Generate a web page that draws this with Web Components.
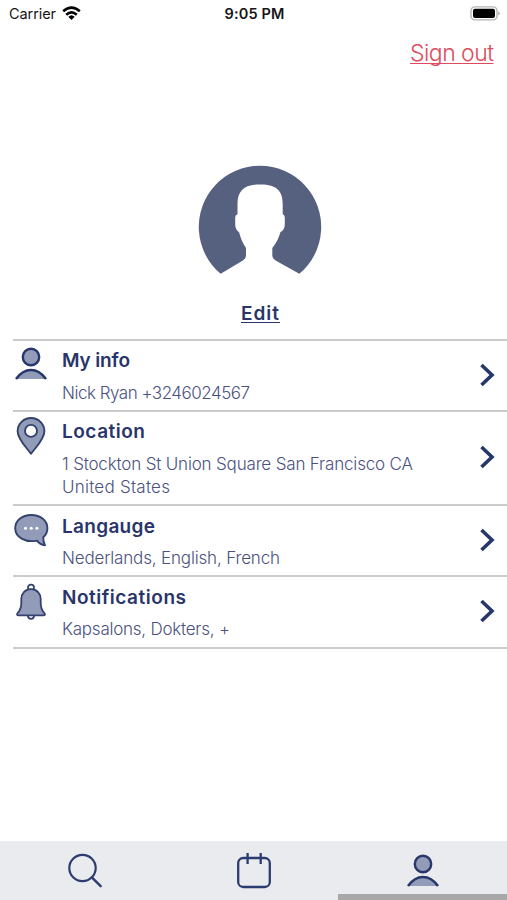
<!DOCTYPE html>
<html lang="en">
<head>
<meta charset="utf-8">
<title>Profile</title>
<style>
  body {
    margin: 0;
    background: #fff;
    font-family: Inter, "Liberation Sans", sans-serif;
  }
</style>
</head>
<body>
<profile-screen></profile-screen>

<script>
const USER = `
  <path d="M2 33Q17 14 32 33Z" fill="#929bb8"/>
  <path d="M2 33Q8.5 24 17 24T32 33" fill="none" stroke="#27376a" stroke-width="2.6"/>
  <circle cx="17" cy="11" r="8.2" fill="#929bb8" stroke="#27376a" stroke-width="2.4"/>`;

const icons = {
  user: USER,
  pin: `
    <path fill-rule="evenodd" d="M17 36.8C12 30 3.6 22 3.6 14.2a13.4 13.2 0 0 1 26.8 0C30.4 22 22 30 17 36.8ZM17 7.9a6 6 0 1 0 0 12a6 6 0 0 0 0-12Z" fill="#929bb8" stroke="#34426f" stroke-width="1.9" stroke-linejoin="round"/>`,
  chat: `
    <path d="M31 33.2C28 33 25 31.5 23 28.6C11 31 1.2 25 1.2 16.3C1.2 8.5 8 3 17.3 3S33.4 8.5 33.4 16.3C33.4 20 32 23 29.2 25.3C29.2 28 29.7 31 31 33.2Z" fill="#929bb8" stroke="#34426f" stroke-width="1.9" stroke-linejoin="round"/>
    <g fill="#fff"><circle cx="11.5" cy="16.3" r="1.5"/><circle cx="17.2" cy="16.3" r="1.5"/><circle cx="22.9" cy="16.3" r="1.5"/></g>`,
  bell: `
    <circle cx="17" cy="4.6" r="3" fill="none" stroke="#34426f" stroke-width="1.8"/>
    <circle cx="17" cy="32.8" r="3" fill="#fff" stroke="#34426f" stroke-width="1.8"/>
    <path d="M17 6.2C11 6.2 7.3 10.5 7.3 16V20C7.3 25 6.2 27.5 3.4 30.4Q2.2 32.3 4.6 32.3H29.4Q31.8 32.3 30.6 30.4C27.8 27.5 26.7 25 26.7 20V16C26.7 10.5 23 6.2 17 6.2Z" fill="#929bb8" stroke="#34426f" stroke-width="1.8"/>`,
  search: `
    <circle cx="14.5" cy="15" r="13.2" fill="none" stroke="#2d3c70" stroke-width="2.2"/>
    <path d="M23.8 24.4L32.7 33.2" stroke="#2d3c70" stroke-width="2.4" stroke-linecap="round"/>`,
  calendar: `
    <rect x="1.2" y="5" width="31.6" height="29" rx="5" fill="none" stroke="#2d3c70" stroke-width="2.3"/>
    <path d="M10.6 0V11M23.7 0V11" stroke="#2d3c70" stroke-width="2.3"/>`,
};

class UiIcon extends HTMLElement {
  constructor() {
    super();
    this.attachShadow({ mode: "open" });
  }

  connectedCallback() {
    this.shadowRoot.innerHTML = `
    <style>
        :host { display: block; width: 34px; height: 38px; flex: none; }
        svg { display: block; }
    </style>
    <svg width="34" height="38" viewBox="0 0 34 38" overflow="visible">${icons[this.getAttribute("name")]}</svg>
`;
  }
}
customElements.define("ui-icon", UiIcon);

// One line of text, tracked so that it runs exactly to the given width
class FitText extends HTMLElement {
  constructor() {
    super();
    this.attachShadow({ mode: "open" });
    this.shadowRoot.innerHTML = `
    <style>
        :host { display: block; white-space: nowrap; text-decoration: inherit; }
        span { display: inline-block; text-decoration: inherit; }
    </style>
    <span><slot></slot></span>
`;
  }

  connectedCallback() {
    const span = this.shadowRoot.querySelector("span");
    const width = Number(this.getAttribute("w"));
    const count = this.textContent.length;
    const natural = span.getBoundingClientRect().width;
    const gap = (width - natural) / (count - 1);
    span.style.letterSpacing = `${gap}px`;
    span.style.marginRight = `${-gap}px`;
  }
}
customElements.define("fit-text", FitText);

class StatusBar extends HTMLElement {
  constructor() {
    super();
    this.attachShadow({ mode: "open" });
    this.shadowRoot.innerHTML = `
    <style>
        :host {
            display: grid;
            grid-template-columns: 1fr auto 1fr;
            align-items: center;
            height: 27px;
            padding: 0 7px 0 9px;
            color: #161616;
            font-size: 14.5px;
        }
        .carrier { display: flex; align-items: center; gap: 6px; }
        .time { font-weight: 600; }
        .battery { justify-self: end; margin-right: -1px; }
        svg { display: block; }
    </style>
    <div class="carrier">
        <fit-text w="47">Carrier</fit-text>
        <svg width="19" height="15" viewBox="0 0 19 15" fill="none" stroke="#000" stroke-width="2.6">
            <path d="M1.2 5.2Q9.5 -2 17.8 5.2"/>
            <path d="M4.2 8.7Q9.5 4.1 14.8 8.7"/>
            <path d="M9.5 9.2Q11 9.2 12.7 10.7L9.5 14L6.3 10.7Q8 9.2 9.5 9.2Z" fill="#000" stroke="none"/>
        </svg>
    </div>
    <fit-text class="time" w="60">9:05 PM</fit-text>
    <svg class="battery" width="31" height="15" viewBox="0 0 31 15">
        <rect x="1" y=".9" width="26" height="13" rx="4" fill="#fff" stroke="#b4b4b4" stroke-width="1.4"/>
        <rect x="3" y="2.8" width="22" height="9.2" rx="2" fill="#000"/>
        <path d="M28.3 5.2Q31.4 7.4 28.3 9.6Z" fill="#aaa"/>
    </svg>
`;
  }
}
customElements.define("status-bar", StatusBar);

class ProfileHeader extends HTMLElement {
  constructor() {
    super();
    this.attachShadow({ mode: "open" });
    this.shadowRoot.innerHTML = `
    <style>
        :host { display: flex; flex-direction: column; height: 312px; }
        a { color: inherit; cursor: pointer; }
        .signout {
            align-self: flex-end;
            margin: 11px 13px 0 0;
            color: #df4a5c;
            font-size: 23px;
            font-weight: 300;
            line-height: 30px;
            text-decoration: underline 1px;
            text-underline-offset: 2px;
            text-decoration-skip-ink: none;
        }
        .avatar { display: block; margin: 97.5px 0 0 198px; }
        .edit {
            margin: 27.5px 0 0 241px;
            align-self: flex-start;
            color: #29346a;
            font-size: 19px;
            font-weight: 600;
            line-height: 24px;
            text-decoration: underline 1px;
            text-underline-offset: 2px;
        }
    </style>
    <a class="signout"><fit-text w="84">Sign out</fit-text></a>
    <svg class="avatar" width="124" height="109" viewBox="0 0 124 109" overflow="visible">
        <path fill="#56617f" d="M22.7 107.8A61.2 61.2 0 1 1 101.3 107.8L78 94.8Q74.3 92.5 74.3 89V82C78 77.5 80.4 73 82.5 66C85 65 86.8 62 86.8 58.5V51.5Q86.8 49 84.7 48V38C84.7 25 79 18.4 62.5 18.4S39.5 25 39.5 38V48Q37.2 49 37.2 51.5V58.5C37.2 62 39 65 41 66C42.8 73 45 77.5 48 82V89Q48 92.5 44.5 94.8Z"/>
    </svg>
    <a class="edit"><fit-text w="38">Edit</fit-text></a>
`;
  }
}
customElements.define("profile-header", ProfileHeader);

class SettingsRow extends HTMLElement {
  constructor() {
    super();
    this.attachShadow({ mode: "open" });
  }

  connectedCallback() {
    this.shadowRoot.innerHTML = `
    <style>
        :host {
            display: flex;
            box-sizing: border-box;
            height: 71.1px;
            border-bottom: 2px solid #cbcbcd;
            padding: 5.3px 12px 0 1px;
        }
        :host([tall]) { height: 94.3px; }
        .body { flex: 1; margin-left: 14px; }
        .title {
            color: #29346a;
            font-size: 19px;
            font-weight: 600;
            line-height: 29.4px;
        }
        .detail {
            margin-top: 6px;
            color: #4b5280;
            font-size: 17px;
            font-weight: 300;
            line-height: 23.3px;
        }
        .chevron { align-self: center; margin-top: -7px; }
    </style>
    <ui-icon name="${this.getAttribute("icon")}"></ui-icon>
    <div class="body">
        <fit-text class="title" w="${this.getAttribute("w")}">${this.getAttribute("heading")}</fit-text>
        <div class="detail"><slot></slot></div>
    </div>
    <svg class="chevron" width="16" height="24" viewBox="0 0 16 24">
        <path d="M2.5 2L13 12L2.5 22" fill="none" stroke="#27376a" stroke-width="3.6"/>
    </svg>
`;
  }
}
customElements.define("settings-row", SettingsRow);

class TabBar extends HTMLElement {
  constructor() {
    super();
    this.attachShadow({ mode: "open" });
    this.shadowRoot.innerHTML = `
    <style>
        :host { display: flex; flex-direction: column; height: 59px; background: #e9ebee; }
        nav { display: flex; justify-content: space-around; height: 53px; padding-top: 12px; box-sizing: border-box; }
        .strip { align-self: flex-end; width: 169px; height: 6px; background: #a8a8a8; }
    </style>
    <nav>
        <ui-icon name="search"></ui-icon>
        <ui-icon name="calendar"></ui-icon>
        <ui-icon name="user"></ui-icon>
    </nav>
    <div class="strip"></div>
`;
  }
}
customElements.define("tab-bar", TabBar);

class ProfileScreen extends HTMLElement {
  constructor() {
    super();
    this.attachShadow({ mode: "open" });
    this.shadowRoot.innerHTML = `
    <style>
        :host { display: flex; flex-direction: column; height: 900px; overflow: hidden; }
        main { flex: 1; margin-left: 13px; border-top: 2px solid #cbcbcd; }
    </style>
    <status-bar></status-bar>
    <profile-header></profile-header>
    <main>
        <settings-row icon="user" heading="My info" w="68"><fit-text w="188">Nick Ryan +3246024567</fit-text></settings-row>
        <settings-row icon="pin" heading="Location" w="83" tall><fit-text w="351">1 Stockton St Union Square San Francisco CA</fit-text><fit-text w="108">United States</fit-text></settings-row>
        <settings-row icon="chat" heading="Langauge" w="93"><fit-text w="218">Nederlands, English, French</fit-text></settings-row>
        <settings-row icon="bell" heading="Notifications" w="124"><fit-text w="168">Kapsalons, Dokters, +</fit-text></settings-row>
    </main>
    <tab-bar></tab-bar>
`;
  }
}
customElements.define("profile-screen", ProfileScreen);
</script>
</body>
</html>
